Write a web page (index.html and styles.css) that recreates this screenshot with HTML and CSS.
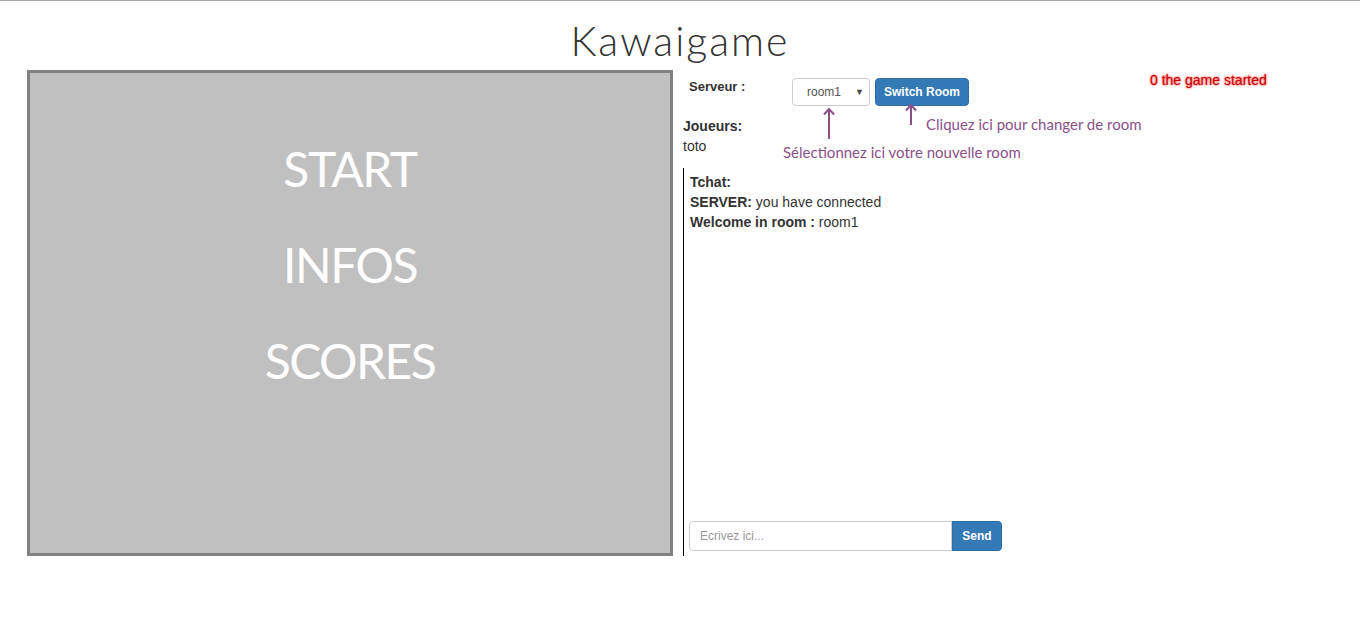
FILE: index.html
```html
<!DOCTYPE html>
<html lang="fr">
<head>
<meta charset="utf-8">
<title>Kawaigame</title>
<link rel="stylesheet" href="styles.css">
</head>
<body>
<header class="header">
  <h1 class="title">Kawaigame</h1>
</header>
<main class="main">
  <section class="game">
    <div class="menu">
      <div class="menu-item">START</div>
      <div class="menu-item">INFOS</div>
      <div class="menu-item">SCORES</div>
    </div>
  </section>
  <section class="panel">
    <div class="top">
      <div class="server-row">
        <span class="label server-label">Serveur :</span>
        <div class="select">
          <span class="select-value">room1</span>
          <span class="select-caret">&#9660;</span>
        </div>
        <button class="btn switch-btn">Switch Room</button>
        <span class="status">0 the game started</span>
      </div>
      <div class="players">
        <div class="label">Joueurs:</div>
        <div class="player">toto</div>
      </div>
      <svg class="arrow arrow-select" width="12" height="32" viewBox="0 0 12 32"><path d="M6 31V1M1 6.5L6 1l5 5.5" fill="none" stroke="#8c4f8a" stroke-width="2"/></svg>
      <svg class="arrow arrow-switch" width="12" height="22" viewBox="0 0 12 22"><path d="M6 21V1M1 6.5L6 1l5 5.5" fill="none" stroke="#8c4f8a" stroke-width="2"/></svg>
      <span class="note note-switch">Cliquez ici pour changer de room</span>
      <span class="note note-select">Sélectionnez ici votre nouvelle room</span>
    </div>
    <div class="chat">
      <div class="label">Tchat:</div>
      <div class="msg"><b>SERVER:</b> you have connected</div>
      <div class="msg"><b>Welcome in room :</b> room1</div>
      <form class="chat-form">
        <input class="chat-input" type="text" placeholder="Ecrivez ici...">
        <button class="btn send-btn" type="button">Send</button>
      </form>
    </div>
  </section>
</main>
</body>
</html>
```

FILE: styles.css
```css
* { box-sizing: border-box; }

html, body {
  margin: 0;
  padding: 0;
  background: #fff;
}

body {
  font-family: "Liberation Sans", Arial, sans-serif;
  font-size: 14px;
  line-height: 20px;
  color: #333;
  border-top: 1px solid #a8a8a8;
}

.header {
  height: 69px;
  padding-top: 16px;
  text-align: center;
}

.title {
  margin: 0;
  font-family: Lato, "DejaVu Sans", sans-serif;
  font-weight: 300;
  font-size: 41px;
  line-height: 48px;
  letter-spacing: 2px;
  color: #333;
}

.main {
  display: flex;
  padding-left: 27px;
}

.game {
  width: 646px;
  height: 486px;
  border: 3px solid #808080;
  background: #c0c0c0;
  flex: none;
}

.menu {
  display: flex;
  flex-direction: column;
  align-items: center;
  padding-top: 48px;
}

.menu-item {
  font-family: Lato, "Open Sans", sans-serif;
  font-size: 48px;
  line-height: 96px;
  color: #fff;
  letter-spacing: -1.5px;
}

.panel {
  flex: 1;
  display: flex;
  flex-direction: column;
  margin-left: 10px;
}

.top {
  position: relative;
  padding-top: 8px;
}

.server-row {
  display: flex;
  align-items: flex-start;
  padding-left: 6px;
}

.label {
  font-weight: bold;
}

.server-label {
  width: 103px;
  font-size: 13px;
  line-height: 18px;
}

.select {
  position: relative;
  width: 78px;
  height: 28px;
  border: 1px solid #ccc;
  border-radius: 4px;
  background: #fff;
  font-size: 12px;
  line-height: 26px;
  color: #555;
  padding-left: 14px;
}

.select-caret {
  position: absolute;
  right: 5px;
  top: 0;
  font-size: 9px;
  color: #444;
}

.btn {
  font-family: "Liberation Sans", Arial, sans-serif;
  font-weight: bold;
  font-size: 12px;
  color: #fff;
  background: #337ab7;
  border: 1px solid #2e6da4;
  border-radius: 4px;
  padding: 0 8px;
  height: 28px;
  white-space: nowrap;
  cursor: pointer;
}

.switch-btn {
  margin-left: 5px;
}

.status {
  margin-left: 181px;
  margin-top: -8px;
  color: #c80000;
  text-shadow: 0 0 2px #ff5050, 0 0 3px #ff9090;
  white-space: nowrap;
}

.players {
  margin-top: 10px;
}

.player {
  color: #333;
}

.arrow {
  position: absolute;
}

.arrow-select {
  left: 140px;
  top: 38px;
}

.arrow-switch {
  left: 222px;
  top: 34px;
}

.note {
  position: absolute;
  font-family: Lato, "Open Sans", sans-serif;
  font-size: 15px;
  line-height: 20px;
  color: #8c4f8a;
  white-space: nowrap;
}

.note-switch {
  left: 243px;
  top: 44px;
}

.note-select {
  left: 100px;
  top: 72px;
}

.chat {
  flex: 1;
  display: flex;
  flex-direction: column;
  margin-top: 12px;
  border-left: 1px solid #000;
  padding: 4px 0 5px 6px;
}

.chat-form {
  margin: auto 0 0 -1px;
  display: flex;
}

.chat-input {
  width: 263px;
  height: 30px;
  border: 1px solid #ccc;
  border-radius: 4px 0 0 4px;
  padding: 0 10px;
  font-family: "Liberation Sans", Arial, sans-serif;
  font-size: 12px;
  color: #555;
  outline: none;
}

.chat-input::placeholder {
  color: #999;
}

.send-btn {
  width: 50px;
  height: 30px;
  padding: 0;
  border-radius: 0 4px 4px 0;
}
```
